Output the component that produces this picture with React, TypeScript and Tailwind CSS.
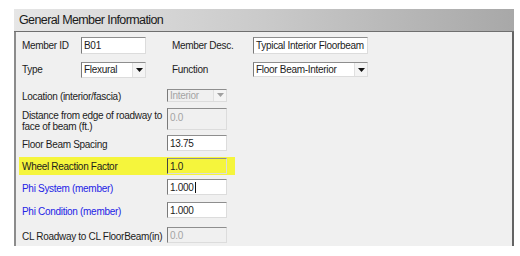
import React from "react";

const lbl = "text-[10px] tracking-[-0.3px] leading-[11px] text-[#1c1c1c]";

function Arrow({ disabled }: { disabled?: boolean }) {
  return (
    <div className="w-[13px] h-full flex items-center justify-center bg-[#f4f4f4] border-l border-[#e0e0e0]">
      <svg width="7" height="4" viewBox="0 0 7 4">
        <path d="M0 0 L7 0 L3.5 4 Z" fill={disabled ? "#a0a0a0" : "#111"} />
      </svg>
    </div>
  );
}

function Field({
  value,
  w = "w-[61px]",
  h = "h-[16px]",
  disabled,
  select,
  yellow,
  caret,
  top,
}: {
  value: string;
  w?: string;
  h?: string;
  disabled?: boolean;
  select?: boolean;
  yellow?: boolean;
  caret?: boolean;
  top?: boolean;
}) {
  const bg = yellow ? "bg-[#f5f53c]" : disabled ? "bg-[#f0f0f0]" : "bg-white";
  const txt = disabled ? "text-[#a4a4a4]" : "text-[#1c1c1c]";
  return (
    <div
      className={`${w} ${h} ${bg} flex border border-t-[#8e8e8e] border-l-[#7a7a7a] border-r-[#dcdcdc] border-b-[#dcdcdc] ${
        yellow ? "border-l-[#444] border-r-[#c8c83a] border-b-[#c8c83a]" : ""
      }`}
    >
      <div
        className={`flex-1 flex ${top ? "items-start pt-[1px]" : "items-center"} pl-[2px] text-[10px] tracking-[-0.3px] ${txt} overflow-hidden whitespace-nowrap`}
      >
        {value}
        {caret && <span className="inline-block w-[1px] h-[11px] bg-[#111] ml-[1px]" />}
      </div>
      {select && <Arrow disabled={disabled} />}
    </div>
  );
}

function Row({
  label,
  children,
  className = "",
}: {
  label: React.ReactNode;
  children: React.ReactNode;
  className?: string;
}) {
  return (
    <div className={`flex items-center ${className}`}>
      <div className="w-[145px]">{label}</div>
      {children}
    </div>
  );
}

export default function App() {
  return (
    <div className="w-[520px] h-[256px] bg-white pt-[9px] pl-[14px] font-['Liberation_Sans',Arial,sans-serif]">
      <div className="w-[500px] h-[237px] flex flex-col">
        <div className="h-[23px] flex items-center pl-[5px] bg-gradient-to-r from-[#e6e6e6] via-[#cacaca] to-[#a8a8a8] border-b border-[#6f6f6f] text-[12.5px] tracking-[-0.6px] text-[#1a1a1a]">
          General Member Information
        </div>
        <div className="flex-1 bg-[#f0f0f0] border-l-2 border-l-[#8c8c8c] border-r-2 border-r-[#646464] pl-[6px] flex flex-col">
          <div className="flex items-center h-[20px] mt-[3px]">
            <div className={`w-[59px] ${lbl}`}>Member ID</div>
            <Field value="B01" w="w-[65px]" h="h-[17px]" />
            <div className={`ml-[26px] w-[81px] ${lbl}`}>Member Desc.</div>
            <Field value="Typical Interior Floorbeam" w="w-[115px]" h="h-[17px]" />
          </div>
          <div className="flex items-center h-[21px] mt-[4px]">
            <div className={`w-[59px] ${lbl}`}>Type</div>
            <Field value="Flexural" w="w-[65px]" h="h-[16px]" select />
            <div className={`ml-[26px] w-[81px] ${lbl}`}>Function</div>
            <Field value="Floor Beam-Interior" w="w-[115px]" h="h-[15px]" select />
          </div>
          <Row className="h-[18px] mt-[6px]" label={<span className={lbl}>Location (interior/fascia)</span>}>
            <Field value="Interior" w="w-[60px]" h="h-[13px]" select disabled />
          </Row>
          <Row
            className="h-[25px] mt-[2px] items-start"
            label={
              <div className={`${lbl} leading-[10px] pt-[4px]`}>
                Distance from edge of roadway to
                <br />
                face of beam (ft.)
              </div>
            }
          >
            <div className="mt-[2px]">
              <Field value="0.0" w="w-[60px]" h="h-[22px]" disabled top />
            </div>
          </Row>
          <Row className="h-[20px] mt-[2px]" label={<span className={lbl}>Floor Beam Spacing</span>}>
            <Field value="13.75" w="w-[60px]" h="h-[16px]" />
          </Row>
          <div className="flex items-center h-[18px] mt-[4px] -ml-[3px] pl-[3px] w-[216px] bg-[#f5f53c]">
            <div className={`w-[145px] ${lbl}`}>Wheel Reaction Factor</div>
            <Field value="1.0" w="w-[60px]" h="h-[16px]" yellow />
          </div>
          <Row className="h-[20px] mt-[2px]" label={<span className={`${lbl} text-[#2323e6]`}>Phi System (member)</span>}>
            <Field value="1.000" w="w-[60px]" h="h-[16px]" caret />
          </Row>
          <Row className="h-[20px] mt-[3px]" label={<span className={`${lbl} text-[#2323e6]`}>Phi Condition (member)</span>}>
            <Field value="1.000" w="w-[60px]" h="h-[16px]" />
          </Row>
          <Row className="h-[20px] mt-[5px]" label={<span className={lbl}>CL Roadway to CL FloorBeam(in)</span>}>
            <Field value="0.0" w="w-[60px]" h="h-[16px]" disabled />
          </Row>
        </div>
      </div>
    </div>
  );
}
